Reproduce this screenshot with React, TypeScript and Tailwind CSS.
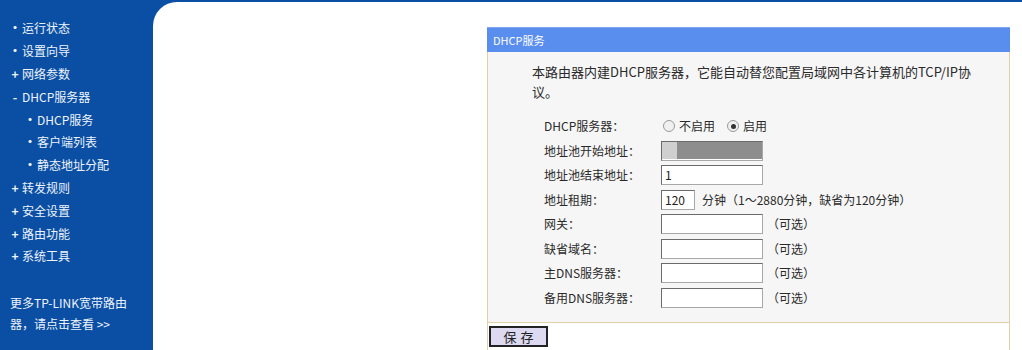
import React from 'react';

type NavItem = { mark: '•' | '+' | '-'; label: string; sub?: boolean };

const navItems: NavItem[] = [
  { mark: '•', label: '运行状态' },
  { mark: '•', label: '设置向导' },
  { mark: '+', label: '网络参数' },
  { mark: '-', label: 'DHCP服务器' },
  { mark: '•', label: 'DHCP服务', sub: true },
  { mark: '•', label: '客户端列表', sub: true },
  { mark: '•', label: '静态地址分配', sub: true },
  { mark: '+', label: '转发规则' },
  { mark: '+', label: '安全设置' },
  { mark: '+', label: '路由功能' },
  { mark: '+', label: '系统工具' },
];

const font = { fontFamily: '"Noto Sans CJK SC", "Noto Sans", sans-serif' };

function TextBox({ w = 'w-[102px]', children }: { w?: string; children?: React.ReactNode }) {
  return (
    <div
      className={`${w} h-[20px] bg-white border border-t-[#6b6b6b] border-l-[#6b6b6b] border-r-[#a8a8a8] border-b-[#a8a8a8] relative overflow-hidden text-[12px] leading-[18px] pl-[3px] text-[#222]`}
    >
      {children}
    </div>
  );
}

function Radio({ checked }: { checked?: boolean }) {
  return (
    <span className="w-[12px] h-[12px] rounded-full border border-[#9a9a9a] bg-[#f0f0f0] flex items-center justify-center shrink-0">
      {checked && <span className="w-[5px] h-[5px] rounded-full bg-[#333]" />}
    </span>
  );
}

function Row({ label, children }: { label: string; children: React.ReactNode }) {
  return (
    <div className="flex items-center h-[24.5px]">
      <div className="w-[117px] shrink-0 text-[#2a2a2a]">{label}</div>
      <div className="flex items-center">{children}</div>
    </div>
  );
}

const optional = <span className="ml-[4px] text-[#2a2a2a]">（可选）</span>;

export default function App() {
  return (
    <div className="w-[1022px] h-[350px] bg-[#0a4fa4] flex overflow-hidden text-[12px]" style={font}>
      {/* Sidebar */}
      <aside className="w-[153px] shrink-0 pt-[17px] flex flex-col text-[#eef3fa]">
        <ul className="flex flex-col">
          {navItems.map((item) => (
            <li
              key={item.label}
              className={`flex items-center h-[22.8px] ${item.sub ? 'pl-[23px]' : 'pl-[8px]'}`}
            >
              <span className="w-[14px] text-center font-bold leading-none">{item.mark}</span>
              <span>{item.label}</span>
            </li>
          ))}
        </ul>
        <p className="mt-[24px] pl-[10px] pr-[14px] leading-[21px]">
          更多TP-LINK宽带路由器，请点击查看 &gt;&gt;
        </p>
      </aside>

      {/* Main */}
      <main className="w-[869px] shrink-0 mt-[2px] bg-white rounded-tl-[24px] pt-[25px] pl-[334px] flex">
        <div className="w-[523px] shrink-0 flex flex-col h-full">
          <div className="h-[25px] bg-[#5a8eee] text-white text-[11px] leading-[25px] pl-[6px] border-t border-[#7fa8f2]">
            DHCP服务
          </div>
          <div className="border-l border-r border-b border-[#e3d0a8] bg-[#f6f6f6] h-[271px] pl-[44px] pt-[10px]">
            <p className="leading-[20px] text-[13px] text-[#2a2a2a]">
              本路由器内建DHCP服务器，它能自动替您配置局域网中各计算机的TCP/IP协
              <br />
              议。
            </p>
            <div className="mt-[12px] pl-[12px] flex flex-col">
              <Row label="DHCP服务器：">
                <span className="ml-[2px]"><Radio /></span>
                <span className="ml-[4px] text-[#2a2a2a]">不启用</span>
                <span className="ml-[12px]"><Radio checked /></span>
                <span className="ml-[4px] text-[#2a2a2a]">启用</span>
              </Row>
              <Row label="地址池开始地址：">
                <TextBox>
                  <div className="absolute left-[15px] top-0 right-0 h-[17px] bg-[#8d8d8d]" />
                  <div className="absolute left-0 top-0 w-[15px] h-[17px] bg-[#cfcfcf]" />
                </TextBox>
              </Row>
              <Row label="地址池结束地址：">
                <TextBox>
                  1
                  <div className="absolute left-[16px] top-0 right-[2px] h-[18px] bg-white" />
                </TextBox>
              </Row>
              <Row label="地址租期：">
                <TextBox w="w-[34px]">120</TextBox>
                <span className="ml-[7px] text-[#2a2a2a]">分钟（1～2880分钟，缺省为120分钟）</span>
              </Row>
              <Row label="网关：">
                <TextBox />
                {optional}
              </Row>
              <Row label="缺省域名：">
                <TextBox />
                {optional}
              </Row>
              <Row label="主DNS服务器：">
                <TextBox />
                {optional}
              </Row>
              <Row label="备用DNS服务器：">
                <TextBox />
                {optional}
              </Row>
            </div>
          </div>
          <div className="flex-1 border-l border-r border-[#e3d0a8] pt-[3px] pl-[1px]">
            <button className="w-[59px] h-[21px] bg-[#dcd9f0] border-2 border-[#222] text-[13px] leading-[16px] tracking-[4px] text-[#222] pl-[4px]">
              保存
            </button>
          </div>
        </div>
      </main>
    </div>
  );
}
